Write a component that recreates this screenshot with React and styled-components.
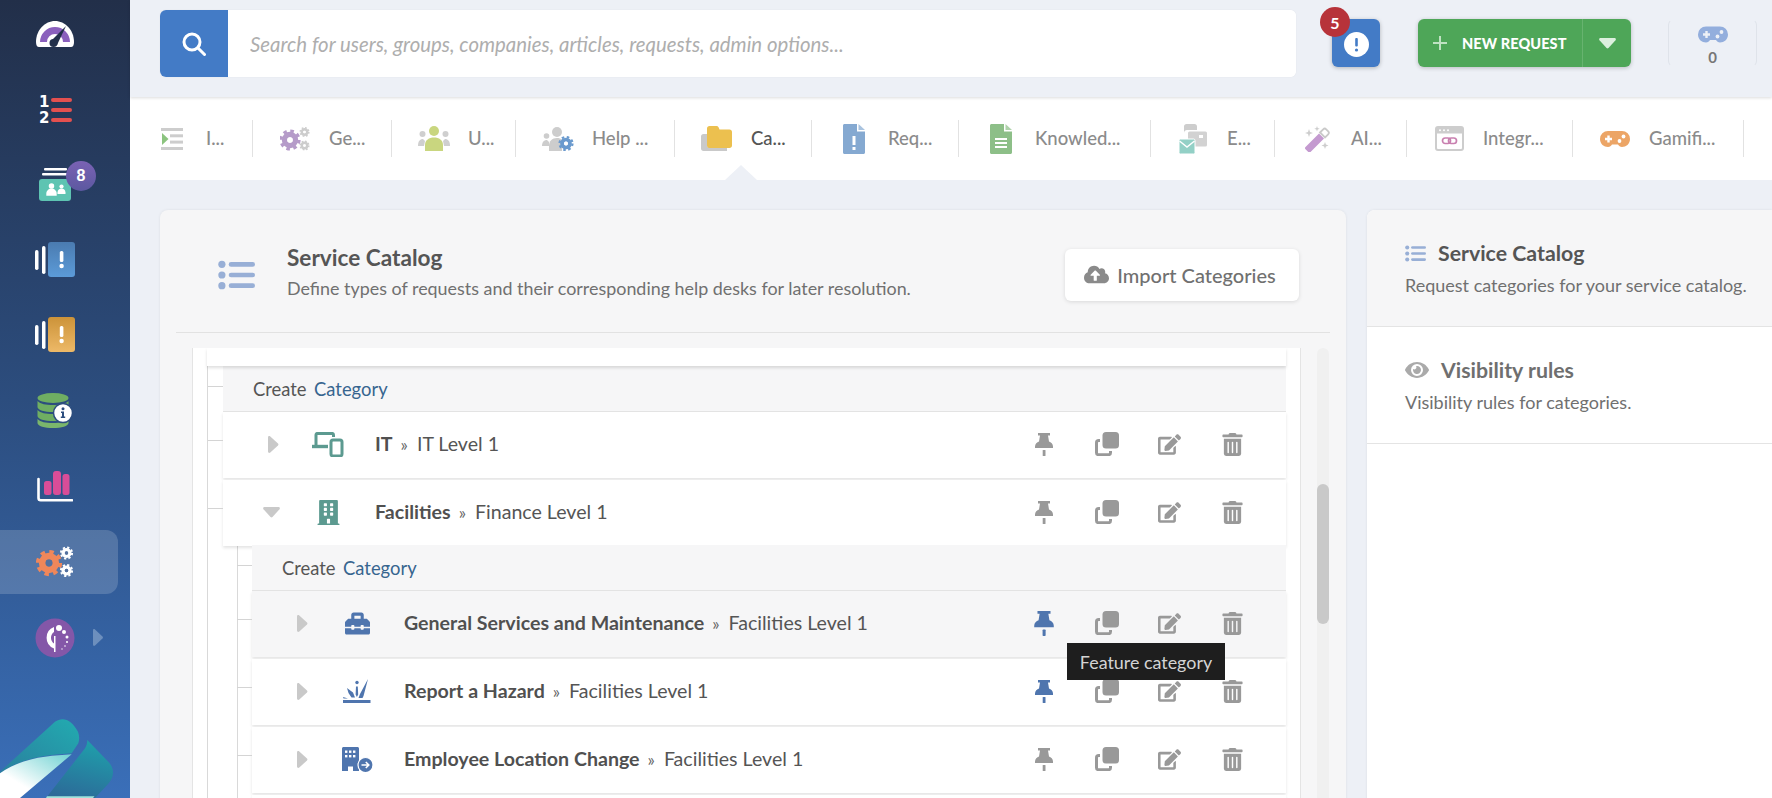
import React from "react";
import styled, { createGlobalStyle } from "styled-components";
import { FaEdit, FaTrashAlt, FaBuilding, FaToolbox, FaEye, FaCloudUploadAlt } from "react-icons/fa";

const Global = createGlobalStyle`
  html, body { margin: 0; height: 100%; overflow: hidden; background: #edf0f6; }
  body { font-family: Lato, "Liberation Sans", sans-serif; color: #555; }
  * { box-sizing: border-box; }
`;

const Page = styled.div`display: flex; width: 1772px; height: 798px; overflow: hidden;`;
const Sidebar = styled.aside`
  width: 130px; height: 798px; flex: none; display: flex; flex-direction: column; overflow: hidden;
  background: linear-gradient(180deg, #222f49 0%, #2c4d7e 50%, #3a6fb9 100%);
`;
const Nav = styled.nav`display: flex; flex-direction: column; gap: 11.6px; padding-top: 1px;`;
const NavItem = styled.div`
  position: relative; width: 118px; height: 64px; flex: none; display: flex; align-items: center;
  justify-content: center; padding-right: 8px; border-radius: 0 12px 12px 0;
  background: ${p => (p.$active ? "rgba(255,255,255,.17)" : "transparent")};
`;
const NavBadge = styled.span`
  position: absolute; left: 66px; top: 9px; width: 30px; height: 30px; border-radius: 50%;
  display: flex; align-items: center; justify-content: center; color: #fff; font: 700 16px "Liberation Sans", sans-serif;
  background: linear-gradient(180deg, #7a62b4, #5c58a0);
`;
const NavCaret = styled.svg`position: absolute; left: 93px; top: 23px;`;
const LogoMark = styled.svg`margin-top: auto; display: block; flex: none;`;

const Main = styled.main`flex: 1; min-width: 0; display: flex; flex-direction: column; height: 798px;`;
const Header = styled.header`
  height: 97px; flex: none; display: flex; align-items: flex-start; padding: 10px 0 0 30px; background: #edf0f6;
  box-shadow: 0 1px 3px rgba(0,0,0,.14); position: relative; z-index: 2;
`;
const SearchBox = styled.div`
  width: 1136px; height: 67px; display: flex; background: #fff; border-radius: 6px; overflow: hidden;
  box-shadow: 0 0 2px rgba(0,0,0,.06);
`;
const SearchBtn = styled.div`width: 68px; flex: none; background: #437bc6; display: flex; align-items: center; justify-content: center;`;
const SearchInput = styled.input`
  flex: 1; border: 0; outline: 0; padding: 0 0 0 22px; background: #fff; font: italic 400 20.4px Lato, sans-serif;
  &::placeholder { color: #aeaeae; opacity: 1; }
`;
const AlertBtn = styled.div`
  position: relative; margin: 9px 0 0 36px; width: 48px; height: 48px; border-radius: 6px; background: #437bc6;
  display: flex; align-items: center; justify-content: center; box-shadow: 0 1px 4px rgba(0,0,0,.25); padding-top: 2px;
`;
const AlertBadge = styled.span`
  position: absolute; left: -12px; top: -12px; width: 30px; height: 30px; border-radius: 50%; background: #b7333a;
  color: #fff; font: 700 16px Lato, sans-serif; display: flex; align-items: center; justify-content: center;
`;
const NewRequest = styled.div`
  margin: 9px 0 0 38px; width: 213px; height: 48px; background: #4ea658; border-radius: 6px; display: flex;
  box-shadow: 0 1px 4px rgba(0,0,0,.22); color: #fff;
`;
const NewMain = styled.div`
  width: 165px; display: flex; align-items: center; padding-left: 15px; gap: 15px; border-right: 1px solid #67b36f;
  font: 900 14.5px Lato, sans-serif; letter-spacing: .1px;
`;
const NewCaret = styled.div`flex: 1; display: flex; align-items: center; justify-content: center;`;
const GameBox = styled.div`
  margin: 9px 0 0 37px; width: 89px; height: 48px; border: 1px solid #dfe3ea; border-top-color: transparent;
  border-bottom-color: transparent; border-radius: 6px; display: flex; flex-direction: column; align-items: center;
  padding-top: 6px; color: #777; font: 700 15px Lato, sans-serif; gap: 5px; line-height: 18px;
`;

const TabBar = styled.div`height: 83px; flex: none; background: #fff; display: flex; align-items: center;`;
const Tab = styled.div`
  position: relative; width: ${p => p.$w}px; height: 37px; flex: none; display: flex; align-items: center;
  padding-left: 26px; gap: 18px; border-right: 1px solid #e2e2e2;
`;
const TabIcon = styled.span`width: 32px; height: 32px; flex: none; display: flex; align-items: center; justify-content: center;`;
const TabLabel = styled.span`
  margin-top: -2px; font: 500 18.5px Lato, sans-serif; color: ${p => (p.$active ? "#555" : "#8b8b8b")}; white-space: nowrap;
`;
const Notch = styled.span`
  position: absolute; left: 50px; top: 45px; width: 0; height: 0; border-left: 16px solid transparent;
  border-right: 16px solid transparent; border-bottom: 15px solid #edf0f6;
`;

const Body = styled.div`flex: 1; min-height: 0; display: flex; gap: 21px; padding: 30px 0 0 30px; overflow: hidden;`;
const Card = styled.section`
  width: 1186px; flex: none; height: 620px; background: #f6f6f7; border-radius: 8px 8px 0 0; overflow: hidden;
  box-shadow: 0 0 3px rgba(0,0,0,.08);
`;
const CardHead = styled.div`
  height: 123px; margin: 0 16px 15px; padding: 7px 31px 0 42px; display: flex; align-items: center; gap: 32px;
  border-bottom: 1px solid #e2e2e2;
`;
const HeadText = styled.div`flex: 1; min-width: 0; margin-top: -6px;`;
const Title = styled.h2`margin: 0; font: 700 22.6px/28px Lato, sans-serif; color: #555;`;
const Desc = styled.p`margin: 4px 0 0; font: 400 17.9px/24px Lato, sans-serif; color: #707070;`;
const ImportBtn = styled.div`
  width: 234px; height: 52px; padding-right: 4px; background: #fff; border-radius: 6px; display: flex; align-items: center; justify-content: center;
  gap: 8px; font: 500 20px Lato, sans-serif; color: #707070; box-shadow: 0 1px 4px rgba(0,0,0,.12); flex: none;
`;
const Scroller = styled.div`display: flex; margin-left: 32px; height: 450px;`;
const TreePanel = styled.div`
  width: 1109px; flex: none; background: #fff; border-left: 1px solid #e4e4e4; border-right: 1px solid #e4e4e4;
  padding: 0 14px 0 14px; overflow: hidden;
`;
const Track = styled.div`position: relative; width: 12px; height: 450px; margin-left: 16px; background: #f0f0f0; border-radius: 6px 6px 0 0;`;
const Thumb = styled.div`position: absolute; left: 0; top: 136px; width: 12px; height: 140px; border-radius: 6px; background: #c9c9c9;`;
const TopRow = styled.div`height: 18px; background: #fff; box-shadow: 0 2px 3px rgba(0,0,0,.13); position: relative; z-index: 1;`;
const Level = styled.div`
  margin: ${p => (p.$nested ? -1 : 0)}px 0 0 ${p => p.$ml}px; padding-left: ${p => p.$pad}px; border-left: 1px solid #d9d9d9;
`;
const CreateRow = styled.div`
  position: relative; height: 46px; background: #f6f6f7; border-bottom: 1px solid #e4e4e4; display: flex; align-items: center;
  padding: 0 0 0 30px; font: 400 18.4px Lato, sans-serif; color: #555; gap: 7.5px;
  &::before { content: ""; position: absolute; left: -15px; top: 20px; width: 15px; height: 1px; background: #d4d4d4; }
`;
const CreateLink = styled.span`color: #37658f;`;
const Row = styled.div`
  position: relative; height: 66px; padding-bottom: 2px; margin-bottom: ${p => (p.$open ? 0 : 2)}px; display: flex; align-items: center;
  background: ${p => (p.$hover ? "#f6f6f7" : "#fff")}; box-shadow: 0 2px 3px rgba(0,0,0,.11);
  &::before { content: ""; position: absolute; left: -15px; top: 28px; width: 15px; height: 1px; background: #d4d4d4; }
`;
const Chevron = styled.span`
  width: 20px; margin: 0 ${p => (p.$down ? 2 : 0)}px 0 ${p => (p.$down ? 38 : 40)}px; flex: none; display: flex; justify-content: center;
`;
const RowIcon = styled.span`width: 36px; margin-left: 27px; flex: none; display: flex; justify-content: center; align-items: center;`;
const RowText = styled.div`
  margin: -2px 0 0 29px; font: 400 19.6px Lato, sans-serif; color: #555; white-space: nowrap; display: flex; align-items: baseline;
`;
const RowName = styled.strong`font-weight: 700; color: #505050;`;
const RowSep = styled.span`margin: 0 9px 0 8px; color: #666; font-size: 17px;`;
const Actions = styled.div`margin-left: auto; padding-right: 22px; display: flex; color: #999;`;
const Action = styled.span`width: 63px; height: 26px; display: flex; align-items: center; justify-content: center;`;
const Tooltip = styled.div`
  position: absolute; left: 815px; top: 52px; width: 158px; height: 37px; background: #1e1e1e; color: #d4d4d4; z-index: 5;
  display: flex; align-items: center; justify-content: center; font: 400 17.9px Lato, sans-serif;
`;
const Side = styled.aside`flex: 1; min-width: 0; height: 620px; background: #fff; border-radius: 8px 0 0 0; overflow: hidden; box-shadow: 0 0 3px rgba(0,0,0,.08);`;
const SideSec = styled.div`
  height: 117px; padding: 27px 0 0 38px; background: ${p => (p.$on ? "#f6f6f7" : "#fff")}; border-bottom: 1px solid #e4e4e4;
`;
const SideTitle = styled.h3`
  margin: 0; display: flex; align-items: center; gap: 12px; font: 700 21.3px/32px Lato, sans-serif; color: ${p => (p.$on ? "#555" : "#6f6f6f")};
`;
const SideDesc = styled.p`margin: 2px 0 0; font: 400 18px/28px Lato, sans-serif; color: #707070;`;

/* ---------- drawings ---------- */
const Gear = ({ cx, cy, r, color, hole }) => {
  const tr = r * 0.86;
  const circ = 2 * Math.PI * tr;
  return (
    <g>
      <circle cx={cx} cy={cy} r={tr} fill="none" stroke={color} strokeWidth={r * 0.3} strokeDasharray={`${circ / 16} ${circ / 16}`} />
      <circle cx={cx} cy={cy} r={r * 0.52} fill="none" stroke={color} strokeWidth={r * 0.52} />
      {hole && <circle cx={cx} cy={cy} r={r * 0.26} fill={hole} />}
    </g>
  );
};
const Person = ({ x, y, s, color }) => (
  <g fill={color}>
    <circle cx={x} cy={y} r={s * 0.42} />
    <path d={`M${x - s * 0.8} ${y + s * 1.5}v-${s * 0.3}c0-${s * 0.5} ${s * 0.4}-${s * 0.8} ${s * 0.8}-${s * 0.8}s${s * 0.8} ${s * 0.3} ${s * 0.8} ${s * 0.8}v${s * 0.3}z`} />
  </g>
);
const ListMark = ({ w, h }) => (
  <svg width={w} height={h} viewBox="0 0 38 30" fill="#98afd6">
    <circle cx="4" cy="4" r="3.7" /><circle cx="4" cy="15" r="3.7" /><circle cx="4" cy="26" r="3.7" />
    <rect x="11" y="1.7" width="27" height="4.8" rx="2.4" /><rect x="11" y="12.6" width="27" height="4.8" rx="2.4" /><rect x="11" y="23.6" width="27" height="4.8" rx="2.4" />
  </svg>
);
const GamePad = ({ w, h, color, holes }) => (
  <svg width={w} height={h} viewBox="0 0 30 16">
    <path d="M8 0h14a8 8 0 0 1 8 8c0 5-4 8-8 8-2 0-3-1-4-2.500h-6c-1 1.500-2 2.500-4 2.500-4 0-8-3-8-8a8 8 0 0 1 8-8z" fill={color} />
    <path d="M5 8h7M8.500 4.500v7" stroke={holes} strokeWidth="2.400" />
    <circle cx="23.500" cy="5.500" r="1.900" fill={holes} /><circle cx="19.500" cy="10" r="1.900" fill={holes} />
  </svg>
);
const Gauge = () => (
  <svg width="38" height="30" viewBox="0 0 38 30">
    <path d="M0 24C0 12 9 3 19 3s19 9 19 21c0 3-1 5-3 5H3C1 29 0 27 0 24z" fill="#fff" />
    <path d="M4 24A15 15 0 0 1 34 24H27A8 8 0 0 0 11 24z" fill="#8a60bd" />
    <path d="M30 8L21 27l-6-4z" fill="#22304b" />
    <circle cx="17.500" cy="25" r="4" fill="#22304b" />
  </svg>
);
const NumList = () => (
  <svg width="36" height="38" viewBox="0 0 36 38">
    <text x="2" y="17" fontFamily="DejaVu Sans, sans-serif" fontWeight="700" fontSize="15" fill="#fff">1</text>
    <text x="2" y="33" fontFamily="DejaVu Sans, sans-serif" fontWeight="700" fontSize="15" fill="#fff">2</text>
    <g fill="#e4504f"><rect x="14" y="8" width="21" height="4" rx="2" /><rect x="14" y="18" width="21" height="4" rx="2" /><rect x="14" y="28" width="21" height="4" rx="2" /></g>
  </svg>
);
const TeamStack = () => (
  <svg width="32" height="33" viewBox="0 0 32 33">
    <rect x="5" y="0" width="23" height="2.400" rx="1" fill="#fff" />
    <rect x="3" y="5" width="26" height="2.400" rx="1" fill="#fff" />
    <rect x="0" y="11" width="32" height="22" rx="3" fill="#5ec4b2" />
    <Person x={12.500} y={18} s={6.500} color="#fff" />
    <Person x={22.500} y={18.500} s={5} color="#fff" />
  </svg>
);
const AlertStack = ({ from, to, id }) => (
  <svg width="40" height="36" viewBox="0 0 40 36">
    <defs><linearGradient id={id} x1="0" y1="0" x2="0" y2="1"><stop offset="0" stopColor={from} /><stop offset="1" stopColor={to} /></linearGradient></defs>
    <rect x="0" y="8" width="3.500" height="20" rx="1.700" fill="#fff" />
    <rect x="7" y="4" width="3.500" height="28" rx="1.700" fill="#fff" />
    <rect x="13" y="0" width="27" height="35" rx="3" fill={`url(#${id})`} />
    <rect x="24.800" y="9" width="3.600" height="11" rx="1.500" fill="#fff" /><circle cx="26.600" cy="24" r="2.200" fill="#fff" />
  </svg>
);
const DbInfo = () => (
  <svg width="36" height="36" viewBox="0 0 36 36">
    <ellipse cx="16" cy="5" rx="15.500" ry="5" fill="#6fae62" />
    <path d="M.5 8c3 3 8 4 15.500 4s12.500-1 15.500-4v6c0 3-7 5-15.500 5S.5 17 .5 14z" fill="#6fae62" />
    <path d="M.5 17c3 3 8 4 15.500 4s12.500-1 15.500-4v6c0 3-7 5-15.500 5S.5 26 .5 23z" fill="#6fae62" />
    <path d="M.5 26c3 3 8 4 15.500 4s12.500-1 15.500-4v4c0 3-7 5-15.500 5S.5 33 .5 30z" fill="#7ab66c" />
    <circle cx="26" cy="20" r="9.500" fill="#fff" stroke="#2c4d7e" strokeWidth="1.500" />
    <circle cx="26" cy="15.800" r="1.500" fill="#2c4d7e" /><path d="M24 18.500h3v5h1.200v1.500h-4.400v-1.500H25v-3.500h-1z" fill="#2c4d7e" />
  </svg>
);
const ChartBars = () => (
  <svg width="36" height="31" viewBox="0 0 36 31">
    <path d="M1.500 8v19c0 1.500.7 2.200 2.200 2.200H35" stroke="#fff" strokeWidth="2.600" fill="none" strokeLinecap="round" />
    <g fill="#d94d98"><rect x="7" y="10" width="7.500" height="14" rx="2.500" /><rect x="16" y="0" width="8" height="24" rx="3" /><rect x="25.500" y="3" width="7" height="21" rx="2.500" /></g>
  </svg>
);
const GearsNav = () => (
  <svg width="38" height="32" viewBox="0 0 38 32">
    <Gear cx={13} cy={17} r={13} color="#f0875a" hole="#54719f" />
    <Gear cx={30.500} cy={7} r={6.500} color="#fff" hole="#54719f" />
    <Gear cx={30.500} cy={24.500} r={6.500} color="#fff" hole="#54719f" />
  </svg>
);
const OrbBadge = () => (
  <svg width="40" height="40" viewBox="0 0 40 40">
    <circle cx="20" cy="20" r="19.500" fill="#8457a8" />
    <path d="M19 9a11.500 11.500 0 0 0 0 21.500v-5a7 7 0 0 1 0-11.500z" fill="#fff" />
    <rect x="19" y="18" width="1.500" height="16" fill="#fff" />
    <circle cx="24" cy="10" r="3" fill="#fff" /><circle cx="29" cy="14" r="2" fill="#fff" /><circle cx="32" cy="19" r="1.500" fill="#fff" />
    <circle cx="32" cy="24" r="1" fill="#fff" /><circle cx="30" cy="28" r=".8" fill="#fff" /><circle cx="27" cy="31" r=".7" fill="#fff" />
  </svg>
);
const Logo = () => (
  <LogoMark width="114" height="80" viewBox="0 0 114 80">
    <defs>
      <linearGradient id="lgA" x1="1" y1="0" x2="0" y2="1"><stop offset="0" stopColor="#22abb0" /><stop offset="1" stopColor="#2a7f9e" /></linearGradient>
      <linearGradient id="lgB" x1="1" y1="0" x2="0" y2="1"><stop offset="0" stopColor="#6fd2d2" /><stop offset=".7" stopColor="#ffffff" /><stop offset="1" stopColor="#ffffff" /></linearGradient>
      <linearGradient id="lgC" x1=".6" y1="0" x2=".3" y2="1"><stop offset="0" stopColor="#1f9fab" /><stop offset="1" stopColor="#2c6a98" /></linearGradient>
    </defs>
    <path d="M0 53.700L55 3.700C63-2 72 2 78 13.700c1.500 4 1.500 8 .3 11.600l-6.600 10C50 37 23 38.700 0 55.300z" fill="url(#lgA)" />
    <path d="M0 55.300C23 38.700 50 38 71.700 36.300L20 80H0z" fill="url(#lgB)" />
    <path d="M87.300 22l21 21.700c6 6 6.600 15 0 22L95 80H46L85 30.300c1.500-2.500 2.300-5 2.300-8.300z" fill="url(#lgC)" />
    <path d="M47 78.200h47.500L93 80H46z" fill="#9fe3dc" />
  </LogoMark>
);
const Triangle = ({ down }) => down ? (
  <svg width="17" height="11" viewBox="0 0 17 11"><path d="M1.500 0h14c1.300 0 1.800 1.300 1 2.300L9.500 10c-.6.6-1.400.6-2 0L.5 2.300C-.3 1.300.2 0 1.500 0z" fill="#c9c9c9" /></svg>
) : (
  <svg width="11" height="17" viewBox="0 0 11 17"><path d="M0 1.500v14c0 1.300 1.300 1.800 2.300 1L10 9.500c.6-.6.6-1.400 0-2L2.300.5C1.300-.3 0 .2 0 1.500z" fill="#c9c9c9" /></svg>
);
const Pin = ({ color, big }) => (
  <svg width={big ? 20 : 18} height={big ? 25 : 23} viewBox="0 0 18 23" fill={color}>
    <path d="M3 0h12v2.600h-2l1 5.800c2 .8 4 2.400 4 5.200v1.400H0v-1.400c0-2.800 2-4.400 4-5.200l1-5.800H3z" /><rect x="7.700" y="17" width="2.800" height="6" rx=".6" />
  </svg>
);
const CopyIcon = () => (
  <svg width="24" height="24" viewBox="0 0 24 24">
    <rect x="7.500" y="0" width="16.500" height="16.500" rx="3.500" fill="#999" />
    <path d="M5 8.500H3.700C2.200 8.500 1.500 9.300 1.500 10.700v10c0 1.300.8 2 2.200 2h9.600c1.400 0 2.200-.7 2.200-2V19" fill="none" stroke="#999" strokeWidth="3" />
  </svg>
);
const LaptopPhone = () => (
  <svg width="32" height="25" viewBox="0 0 32 25" fill="none" stroke="#5c9a90" strokeWidth="3">
    <path d="M4 13V3c0-1 .6-1.600 1.600-1.600H20c1 0 1.500.6 1.500 1.600v2" />
    <path d="M0 14.500h16" strokeWidth="3.400" />
    <rect x="19" y="8" width="11" height="16" rx="2" />
  </svg>
);
const Hazard = () => (
  <svg width="28" height="24" viewBox="0 0 28 24" fill="#4f75ae">
    <rect x="0" y="21" width="27.500" height="3" />
    <path d="M4 9l6 4.500 2 5H8.500L5.500 14zM13 7.500l1.800 0 .4 8-1.300 2.500-1.300-2.500zM25 0l-4.500 17-1 2h-4l1.500-4zM0 18l5 1.500H.5z" />
    <circle cx="14" cy="3.500" r="1.700" />
  </svg>
);
const BuildingMove = () => (
  <svg width="31" height="25" viewBox="0 0 31 25">
    <path d="M1.500 0h14c.8 0 1.500.7 1.500 1.500V24H11v-4.500H6V24H0V1.500C0 .7.700 0 1.500 0z" fill="#4f75ae" />
    <g fill="#fff"><rect x="3" y="3.500" width="2.400" height="2.400" /><rect x="7" y="3.500" width="2.400" height="2.400" /><rect x="11" y="3.500" width="2.400" height="2.400" /><rect x="3" y="8" width="2.400" height="2.400" /><rect x="7" y="8" width="2.400" height="2.400" /><rect x="11" y="8" width="2.400" height="2.400" /></g>
    <circle cx="23.500" cy="18" r="7.500" fill="#4f75ae" stroke="#fff" strokeWidth="1.200" />
    <path d="M19.500 18h7M23.800 15l3 3-3 3" stroke="#fff" strokeWidth="1.600" fill="none" />
  </svg>
);

const TabIndent = () => (
  <svg width="22" height="22" viewBox="0 0 22 22" fill="#cdcdcd">
    <rect width="22" height="3" /><rect x="9" y="6.300" width="13" height="3" /><rect x="9" y="12.600" width="13" height="3" /><rect y="19" width="22" height="3" />
    <path d="M1 5l6.500 6L1 17z" fill="#8cc47f" />
  </svg>
);
const TabGears = () => (
  <svg width="30" height="26" viewBox="0 0 30 26">
    <Gear cx={10} cy={14} r={10.500} color="#b59bc9" hole="#fff" />
    <Gear cx={24.500} cy={6} r={5} color="#cdcdcd" hole="#fff" />
    <Gear cx={24.500} cy={19.500} r={5} color="#cdcdcd" hole="#fff" />
  </svg>
);
const TabUsers = () => (
  <svg width="32" height="25" viewBox="0 0 32 25">
    <circle cx="4.500" cy="8" r="3" fill="#cfcfcf" /><path d="M0 20c0-5 2-7 5-7l2 2-1 5z" fill="#cfcfcf" />
    <circle cx="27.500" cy="8" r="3" fill="#cfcfcf" /><path d="M32 20c0-5-2-7-5-7l-2 2 1 5z" fill="#cfcfcf" />
    <circle cx="16" cy="5" r="5" fill="#c9d67f" /><path d="M7 25v-6c0-5 4-7.500 9-7.500s9 2.500 9 7.500v6z" fill="#c9d67f" />
  </svg>
);
const TabHelp = () => (
  <svg width="32" height="26" viewBox="0 0 32 26">
    <circle cx="4.500" cy="10" r="2.800" fill="#cdcdcd" /><path d="M0 20c0-4 2-6 5-6l2 2v4z" fill="#cdcdcd" />
    <circle cx="15" cy="6" r="5" fill="#cdcdcd" /><path d="M7 25v-5c0-5 3-8 8-8 2 0 4 .6 5 2v11z" fill="#cdcdcd" />
    <Gear cx={24} cy={17.500} r={7.500} color="#6a9ace" hole="#fff" />
  </svg>
);
const TabFolder = () => (
  <svg width="32" height="25" viewBox="0 0 32 25">
    <path d="M0 10.500C0 9 1 8 2.500 8H6v12.500h20V25H2.500C1 25 0 24 0 22.500z" fill="#c9c9c9" />
    <path d="M6 2.500C6 1 7 0 8.500 0h7c1 0 1.800.6 2.200 1.500l.8 2H28.500C30 3.500 31 4.500 31 6v13.500c0 1.500-1 2.500-2.500 2.500h-20C7 22 6 21 6 19.500z" fill="#ecc04f" />
  </svg>
);
const TabDoc = ({ color, children }) => (
  <svg width="22" height="30" viewBox="0 0 22 30">
    <path d="M1.500 0H14v7.500h8V28.500c0 .8-.7 1.500-1.500 1.500h-19C.7 30 0 29.300 0 28.500V1.500C0 .7.700 0 1.500 0z" fill={color} />
    <path d="M15.500 0L22 6h-6.500z" fill={color} opacity=".7" />
    {children}
  </svg>
);
const TabMail = () => (
  <svg width="28" height="30" viewBox="0 0 28 30">
    <path d="M5 9V2.500C5 1 6 0 7.500 0h8C17 0 18 1 18 2.500V6H8C6.500 6 5 7 5 9z" fill="#cdcdcd" />
    <rect x="9" y="7.500" width="19" height="15" rx="1.500" fill="#d2d2d2" /><rect x="20" y="11" width="4" height="3" fill="#fff" />
    <rect x="0" y="15" width="16" height="15" rx="1.500" fill="#93d0c6" stroke="#fff" strokeWidth="1" />
    <path d="M.5 17l7.500 6 7.500-6" stroke="#fff" strokeWidth="1.400" fill="none" />
  </svg>
);
const TabWand = () => (
  <svg width="26" height="26" viewBox="0 0 26 26">
    <path d="M1.500 21L15 7.500l5 5L6.500 26c-.7.600-1.500.6-2.200 0L1.500 23.300c-.7-.7-.7-1.600 0-2.300z" fill="#c49ad0" />
    <path d="M16 6.500l3.200-3.200c1-1 2-1 3 0l2 2c1 1 1 2 0 3L21 11.500z" fill="none" stroke="#c9c9c9" strokeWidth="1.800" />
    <g fill="#cdcdcd"><path d="M5 3l1 3 3 1-3 1-1 3-1-3-3-1 3-1zM13 0l.7 2 2 .7-2 .7-.7 2-.7-2-2-.7 2-.7zM21 16l.9 2.600 2.600.9-2.600.9-.9 2.600-.9-2.600-2.600-.9 2.600-.9z" /></g>
  </svg>
);
const TabWindow = () => (
  <svg width="29" height="25" viewBox="0 0 29 25">
    <rect x="1" y="1" width="27" height="23" rx="2" fill="#fff" stroke="#cdcdcd" strokeWidth="2" />
    <rect x="1" y="1" width="27" height="6.500" fill="#cdcdcd" />
    <g fill="#fff"><circle cx="5" cy="4.200" r="1" /><circle cx="9" cy="4.200" r="1" /><circle cx="13" cy="4.200" r="1" /></g>
    <g fill="none" stroke="#c980b0" strokeWidth="1.700"><rect x="7.500" y="12" width="8" height="5.500" rx="2.700" /><rect x="13.500" y="12" width="8" height="5.500" rx="2.700" /></g>
  </svg>
);

const nav = [
  [Gauge], [NumList], [TeamStack, "team"], [() => <AlertStack from="#4a7bb0" to="#5c9bd8" id="a1" />],
  [() => <AlertStack from="#cc9339" to="#edb968" id="a2" />], [DbInfo], [ChartBars], [GearsNav, "active"], [OrbBadge, "caret"],
];
const tabs = [
  { w: 123, label: "I...", Icon: TabIndent },
  { w: 139, label: "Ge...", Icon: TabGears },
  { w: 124, label: "U...", Icon: TabUsers },
  { w: 159, label: "Help ...", Icon: TabHelp },
  { w: 137, label: "Ca...", Icon: TabFolder, active: true },
  { w: 147, label: "Req...", Icon: () => <TabDoc color="#85a9d1"><rect x="9.500" y="12" width="3" height="9" fill="#fff" /><rect x="9.500" y="23" width="3" height="3" fill="#fff" /></TabDoc> },
  { w: 192, label: "Knowled...", Icon: () => <TabDoc color="#8dbf88"><rect x="5" y="14" width="12" height="2" fill="#fff" /><rect x="5" y="18" width="12" height="2" fill="#fff" /><rect x="5" y="22" width="12" height="2" fill="#fff" /></TabDoc> },
  { w: 124, label: "E...", Icon: TabMail },
  { w: 132, label: "AI...", Icon: TabWand },
  { w: 166, label: "Integr...", Icon: TabWindow },
  { w: 171, label: "Gamifi...", Icon: () => <GamePad w={30} h={16} color="#eca566" holes="#fff" /> },
];

const CategoryRow = ({ name, sub, icon, down, hover, pinned, bigPin, tip }) => (
  <Row $hover={hover} $open={down}>
    <Chevron $down={down}><Triangle down={down} /></Chevron>
    <RowIcon>{icon}</RowIcon>
    <RowText><RowName>{name}</RowName><RowSep>»</RowSep>{sub}</RowText>
    <Actions>
      <Action><Pin color={pinned ? "#4f75ae" : "#999"} big={bigPin} /></Action>
      <Action><CopyIcon /></Action>
      <Action><FaEdit size={23} /></Action>
      <Action><FaTrashAlt size={23} /></Action>
    </Actions>
    {tip && <Tooltip>{tip}</Tooltip>}
  </Row>
);
const CreateCategory = () => (
  <CreateRow>Create <CreateLink>Category</CreateLink></CreateRow>
);

export default function App() {
  return (
    <Page>
      <Global />
      <Sidebar>
        <Nav>
          {nav.map(([Icon, kind], i) => (
            <NavItem key={i} $active={kind === "active"}>
              <Icon />
              {kind === "team" && <NavBadge>8</NavBadge>}
              {kind === "caret" && (
                <NavCaret width="10" height="17" viewBox="0 0 10 17"><path d="M0 1.500v14c0 1.300 1 1.800 2 1l7.500-7c.6-.6.6-1.400 0-2L2 .5C1-.3 0 .2 0 1.500z" fill="#6d8fbd" /></NavCaret>
              )}
            </NavItem>
          ))}
        </Nav>
        <Logo />
      </Sidebar>
      <Main>
        <Header>
          <SearchBox>
            <SearchBtn>
              <svg width="24" height="24" viewBox="0 0 24 24" fill="none" stroke="#fff" strokeWidth="3" strokeLinecap="round"><circle cx="10" cy="10" r="8" /><path d="M16 16l6.500 6.500" /></svg>
            </SearchBtn>
            <SearchInput readOnly placeholder="Search for users, groups, companies, articles, requests, admin options..." />
          </SearchBox>
          <AlertBtn>
            <AlertBadge>5</AlertBadge>
            <svg width="25" height="25" viewBox="0 0 25 25"><circle cx="12.500" cy="12.500" r="12.500" fill="#fff" /><rect x="11.200" y="6" width="2.600" height="8.500" rx="1" fill="#437bc6" /><circle cx="12.500" cy="18" r="1.600" fill="#437bc6" /></svg>
          </AlertBtn>
          <NewRequest>
            <NewMain>
              <svg width="14" height="14" viewBox="0 0 14 14" stroke="#bfe2c2" strokeWidth="2"><path d="M7 0v14M0 7h14" /></svg>
              NEW REQUEST
            </NewMain>
            <NewCaret><svg width="17" height="11" viewBox="0 0 17 11"><path d="M1.500 0h14c1.300 0 1.800 1.300 1 2.300L9.500 10c-.6.6-1.400.6-2 0L.5 2.300C-.3 1.300.2 0 1.500 0z" fill="#dcf0de" /></svg></NewCaret>
          </NewRequest>
          <GameBox>
            <GamePad w={30} h={17} color="#93aedd" holes="#edf0f6" />
            0
          </GameBox>
        </Header>
        <TabBar>
          {tabs.map(t => (
            <Tab key={t.label} $w={t.w}>
              <TabIcon><t.Icon /></TabIcon>
              <TabLabel $active={t.active}>{t.label}</TabLabel>
              {t.active && <Notch />}
            </Tab>
          ))}
        </TabBar>
        <Body>
          <Card>
            <CardHead>
              <ListMark w={37} h={30} />
              <HeadText>
                <Title>Service Catalog</Title>
                <Desc>Define types of requests and their corresponding help desks for later resolution.</Desc>
              </HeadText>
              <ImportBtn><FaCloudUploadAlt size={25} color="#8a8a8a" />Import Categories</ImportBtn>
            </CardHead>
            <Scroller>
              <TreePanel>
                <TopRow />
                <Level $ml={0} $pad={15}>
                  <CreateCategory />
                  <CategoryRow name="IT" sub="IT Level 1" icon={<LaptopPhone />} />
                  <CategoryRow name="Facilities" sub="Finance Level 1" icon={<FaBuilding size={25} color="#5c9a90" />} down />
                  <Level $nested $ml={14} $pad={14}>
                    <CreateCategory />
                    <CategoryRow name="General Services and Maintenance" sub="Facilities Level 1" icon={<FaToolbox size={25} color="#4f75ae" />} hover pinned bigPin tip="Feature category" />
                    <CategoryRow name="Report a Hazard" sub="Facilities Level 1" icon={<Hazard />} pinned />
                    <CategoryRow name="Employee Location Change" sub="Facilities Level 1" icon={<BuildingMove />} />
                    <Row />
                  </Level>
                </Level>
              </TreePanel>
              <Track><Thumb /></Track>
            </Scroller>
          </Card>
          <Side>
            <SideSec $on>
              <SideTitle $on><ListMark w={21} h={17} />Service Catalog</SideTitle>
              <SideDesc>Request categories for your service catalog.</SideDesc>
            </SideSec>
            <SideSec>
              <SideTitle><FaEye size={24} color="#aaa" />Visibility rules</SideTitle>
              <SideDesc>Visibility rules for categories.</SideDesc>
            </SideSec>
          </Side>
        </Body>
      </Main>
    </Page>
  );
}
